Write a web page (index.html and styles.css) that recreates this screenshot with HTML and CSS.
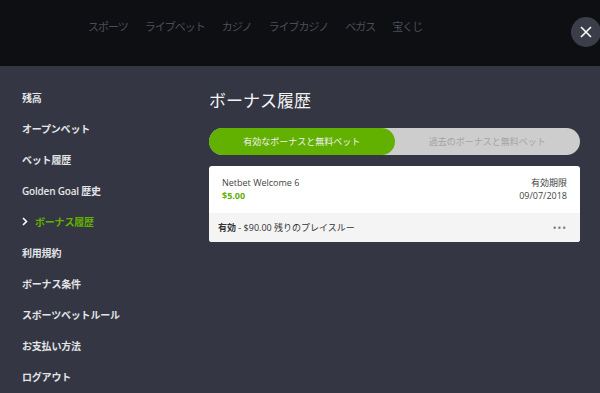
FILE: index.html
```html
<!DOCTYPE html>
<html lang="ja">
<head>
    <meta charset="UTF-8">
    <meta name="viewport" content="width=device-width, initial-scale=1.0">
    <title>ボーナス履歴</title>
    <link rel="stylesheet" href="styles.css">
</head>
<body>
    <header class="topbar">
        <nav class="nav">
            <a href="#">スポーツ</a>
            <a href="#">ライブベット</a>
            <a href="#">カジノ</a>
            <a href="#">ライブカジノ</a>
            <a href="#">ベガス</a>
            <a href="#">宝くじ</a>
        </nav>
        <button class="close" aria-label="閉じる">
            <svg width="12" height="12" viewBox="0 0 12 12"><path d="M1 1L11 11M11 1L1 11" stroke="#fff" stroke-width="1.6" fill="none"/></svg>
        </button>
    </header>
    <div class="main">
        <ul class="menu">
            <li>残高</li>
            <li>オープンベット</li>
            <li>ベット履歴</li>
            <li>Golden Goal 歴史</li>
            <li class="active">
                <svg width="6" height="9" viewBox="0 0 6 9"><path d="M1 1L4.5 4.5L1 8" stroke="#fff" stroke-width="1.6" fill="none"/></svg>
                <span>ボーナス履歴</span>
            </li>
            <li>利用規約</li>
            <li>ボーナス条件</li>
            <li>スポーツベットルール</li>
            <li>お支払い方法</li>
            <li>ログアウト</li>
        </ul>
        <section class="content">
            <h1>ボーナス履歴</h1>
            <div class="tabs">
                <div class="tab selected">有効なボーナスと無料ベット</div>
                <div class="tab">過去のボーナスと無料ベット</div>
            </div>
            <div class="card">
                <div class="card-top">
                    <div>
                        <div class="bonus-name">Netbet Welcome 6</div>
                        <div class="bonus-amount">$5.00</div>
                    </div>
                    <div class="expiry">
                        <div>有効期限</div>
                        <div>09/07/2018</div>
                    </div>
                </div>
                <div class="card-bottom">
                    <div><strong>有効</strong> - $90.00 残りのプレイスルー</div>
                    <div class="dots">•••</div>
                </div>
            </div>
        </section>
    </div>
</body>
</html>
```
FILE: styles.css
```css
/* base */
body {
    margin: 0;
    background-color: #343743;
    font-family: "Open Sans", "Noto Sans CJK JP", sans-serif;
    height: 393px;
    overflow: hidden;
}

/* barra superiore */
.topbar {
    height: 66px;
    background-color: #0e0f13;
    position: relative;
    display: flex;
    align-items: center;
}
.nav {
    display: flex;
    gap: 17px;
    padding-left: 88px;
    margin-top: -14px;
}
.nav a {
    color: #4b4e58;
    font-size: 11px;
    letter-spacing: -1px;
    text-decoration: none;
}
.close {
    position: absolute;
    left: 571px;
    top: 17px;
    width: 30px;
    height: 30px;
    border-radius: 50%;
    border: none;
    background-color: #3b3e49;
    padding: 0;
    display: flex;
    align-items: center;
    justify-content: center;
}

/* layout principale */
.main {
    display: flex;
}
.menu {
    list-style: none;
    margin: 0;
    padding: 16px 0 0 22px;
    width: 187px;
}
.menu li {
    height: 31px;
    display: flex;
    align-items: center;
    color: #e3e4e7;
    font-size: 10px;
    font-weight: 600;
    letter-spacing: -0.2px;
}
.menu li.active {
    color: #62b000;
    gap: 7px;
}

.content {
    width: 371px;
    padding-top: 23px;
}
.content h1 {
    margin: 0;
    font-size: 17px;
    line-height: 24px;
    font-weight: 400;
    color: #f4f4f4;
}

/* tab */
.tabs {
    margin-top: 15px;
    display: flex;
    height: 27px;
    border-radius: 14px;
    background-color: #cdcdcd;
}
.tab {
    flex: 1;
    display: flex;
    align-items: center;
    justify-content: center;
    font-size: 9px;
    color: #a4a4a4;
    border-radius: 14px;
}
.tab.selected {
    background-color: #62b000;
    color: #f2f2f2;
}

/* scheda bonus */
.card {
    margin-top: 11px;
    border-radius: 3px;
    overflow: hidden;
    background-color: #fff;
    font-size: 9px;
    color: #444;
}
.card-top {
    display: flex;
    justify-content: space-between;
    padding: 10px 13px 11px;
    line-height: 13px;
}
.bonus-amount {
    color: #62b000;
    font-weight: 700;
}
.expiry {
    text-align: right;
}
.card-bottom {
    height: 29px;
    background-color: #f4f4f4;
    display: flex;
    align-items: center;
    justify-content: space-between;
    padding: 0 13px 0 9px;
    color: #333;
}
.dots {
    color: #777;
    letter-spacing: 1px;
    font-size: 10px;
}
```
